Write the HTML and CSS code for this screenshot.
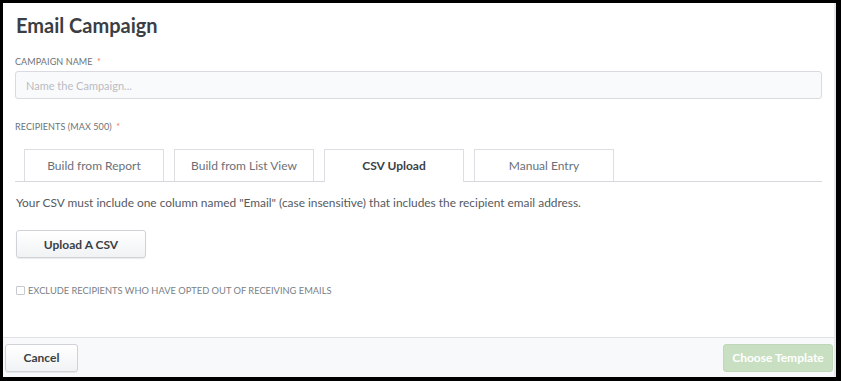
FILE: index.html
```html
<!DOCTYPE html>
<html lang="en">
<head>
    <meta charset="UTF-8">
    <title>Email Campaign</title>
    <link rel="stylesheet" href="styles.css">
</head>
<body>
    <div class="panel">
        <div class="panel-body">
            <h1 class="title">Email Campaign</h1>

            <label class="field-label">Campaign Name <span class="req">*</span></label>
            <input class="text-input" type="text" placeholder="Name the Campaign...">

            <label class="field-label recipients-label">Recipients (max 500) <span class="req">*</span></label>
            <div class="tabs">
                <div class="tab">Build from Report</div>
                <div class="tab">Build from List View</div>
                <div class="tab active">CSV Upload</div>
                <div class="tab">Manual Entry</div>
            </div>

            <p class="help">Your CSV must include one column named "Email" (case insensitive) that includes the recipient email address.</p>

            <button class="btn upload">Upload A CSV</button>

            <label class="check">
                <span class="box"></span>
                Exclude recipients who have opted out of receiving emails
            </label>
        </div>

        <div class="footer">
            <button class="btn cancel">Cancel</button>
            <button class="btn primary" disabled>Choose Template</button>
        </div>
    </div>
</body>
</html>
```

FILE: styles.css
```css
* {
    box-sizing: border-box;
    margin: 0;
    padding: 0;
}

html, body {
    height: 100%;
}

body {
    background: #000;
    padding: 3px 5px 4px 3px;
    font-family: 'Lato', 'Open Sans', sans-serif;
    color: #4a4f57;
}

.panel {
    height: 100%;
    background: #fff;
    display: flex;
    flex-direction: column;
    border-right: 2px solid #e6e7ea;
}

.panel-body {
    flex: 1;
    padding: 10px 12px 0 12px;
}

.title {
    font-size: 20px;
    line-height: 24px;
    font-weight: 700;
    color: #3b3f45;
    margin-left: 1px;
}

.field-label {
    display: block;
    font-size: 9px;
    line-height: 12px;
    text-transform: uppercase;
    color: #6d7278;
    margin-top: 19px;
    letter-spacing: 0.1px;
}

.req {
    color: #f0774a;
    margin-left: 2px;
}

.text-input {
    display: block;
    width: 100%;
    height: 28px;
    margin-top: 3px;
    padding: 0 10px;
    border: 1px solid #d9dbe0;
    border-radius: 3px;
    background: #f9fafc;
    font-family: inherit;
    font-size: 11px;
}

.text-input::placeholder {
    color: #b9bcc2;
}

.recipients-label {
    margin-top: 22px;
}

.tabs {
    display: flex;
    gap: 10px;
    margin-top: 16px;
    padding-left: 9px;
    border-bottom: 1px solid #d6d8dc;
}

.tab {
    width: 140px;
    height: 32px;
    border: 1px solid #dcdee2;
    border-bottom: none;
    text-align: center;
    line-height: 32px;
    font-size: 12px;
    color: #6b7078;
}

.tab.active {
    font-weight: 700;
    color: #3b3f45;
    background: #fff;
    margin-bottom: -1px;
    height: 33px;
}

.help {
    font-size: 11.9px;
    line-height: 16px;
    color: #555a61;
    margin-top: 13px;
    margin-left: 1px;
}

.btn {
    font-family: inherit;
    font-size: 12px;
    font-weight: 700;
    border-radius: 3px;
    height: 28px;
    cursor: pointer;
}

.upload {
    display: block;
    width: 130px;
    margin-top: 19px;
    margin-left: 1px;
    color: #3b3f45;
    background: linear-gradient(#fff, #f1f2f4);
    border: 1px solid #cfd2d6;
    box-shadow: 0 1px 1px rgba(0,0,0,0.08);
}

.check {
    display: flex;
    align-items: center;
    gap: 3px;
    margin-top: 27px;
    margin-left: 1px;
    font-size: 9.3px;
    text-transform: uppercase;
    color: #7a7f86;
}

.box {
    width: 9px;
    height: 9px;
    border: 1px solid #c6c9ce;
    border-radius: 1px;
    background: #fff;
}

.footer {
    height: 40px;
    border-top: 1px solid #dfe1e5;
    background: #f8f9fb;
    display: flex;
    justify-content: space-between;
    align-items: center;
    padding: 0 1px 0 2px;
}

.cancel {
    width: 73px;
    color: #3b3f45;
    background: linear-gradient(#fff, #f1f2f4);
    border: 1px solid #cfd2d6;
    box-shadow: 0 1px 1px rgba(0,0,0,0.08);
}

.primary {
    width: 110px;
    color: #fff;
    background: #c9dfc2;
    border: 1px solid #c0d8b8;
    font-weight: 700;
}
```
